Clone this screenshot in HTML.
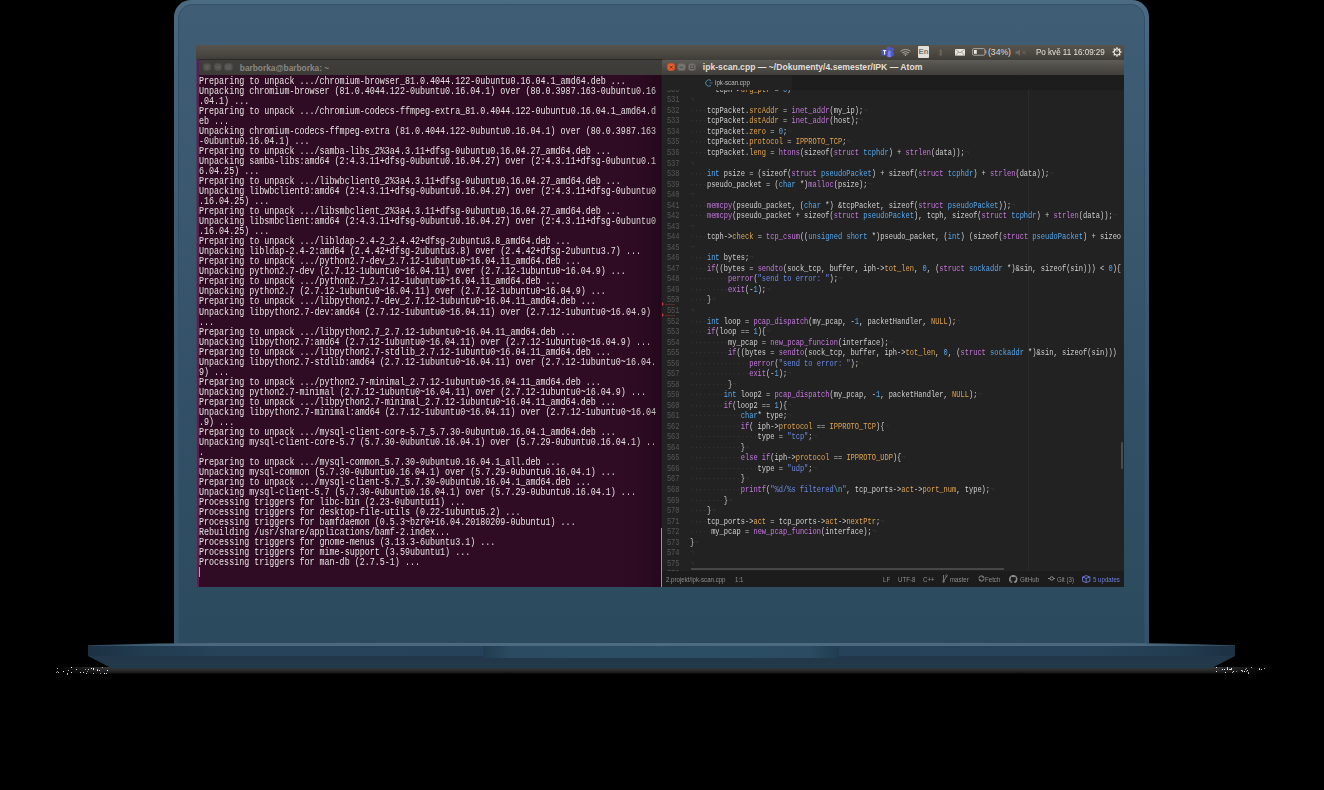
<!DOCTYPE html>
<html><head><meta charset="utf-8">
<style>
*{margin:0;padding:0;box-sizing:border-box}
html,body{width:1324px;height:790px;background:#000;overflow:hidden;position:relative}
body{font-family:"Liberation Sans",sans-serif}
.abs{position:absolute}
#frame{position:absolute;left:174px;top:0;width:975px;height:644px;border-radius:17px 17px 0 0;
 background:linear-gradient(#4b6b83,#45657d 10%,#3a596f 50%,#34536a 100%)}
#frame-in{position:absolute;left:4px;top:4px;right:4px;bottom:0;border-radius:15px 15px 0 0;
 border:1.2px solid #31506a;border-bottom:none;
 background:linear-gradient(#3f5e76,#3a596f 30%,#325166 60%,#2c4a5e 100%)}
#base{position:absolute;left:88px;top:642px;width:1147px;height:32px}
#base .top{position:absolute;left:0;top:0.6px;width:100%;height:3.4px;background:linear-gradient(90deg,#2b475b,#4a697f 8%,#4d6c82 50%,#4a697f 92%,#2b475b);
 clip-path:polygon(0 75%,6% 25%,15% 0,85% 0,94% 25%,100% 75%,100% 100%,0 100%)}
#base .mid{position:absolute;left:0;top:4px;width:100%;height:10px;
 background:linear-gradient(90deg,#1c3142 0%,#223c50 5%,#26435a 12%,#25415a 50%,#26435a 88%,#223c50 95%,#1c3142 100%)}
#base .notch{position:absolute;left:395px;top:4px;width:356px;height:12px;border-radius:0 0 3px 3px;
 background:linear-gradient(90deg,#203c50,#2a4b61 8%,#2c4e64 50%,#2a4b61 92%,#203c50)}
#base .bot{position:absolute;left:0;top:14px;width:1147px;height:12.5px;background:linear-gradient(#22384a,#233a4b);
 clip-path:polygon(0 0,100% 0,97.9% 100%,2.1% 100%)}
#base .specks i{position:absolute;width:1px;height:1px;background:#fff}
#base .shadow{position:absolute;left:-32px;top:24.8px;width:1211px;height:7.2px;background:linear-gradient(#363636,#2a2a2a 50%,#151515 85%,#000);
 -webkit-mask-image:linear-gradient(90deg,transparent,#000 4%,#000 96%,transparent)}
#screen{position:absolute;left:196px;top:45px;width:928px;height:542px;overflow:hidden;background:#3b3a36}
#panel{position:absolute;left:0;top:0;width:928px;height:14px;background:linear-gradient(#57534c,#4c4943 60%,#403e39)}
#panel .ic{position:absolute}
.tb{position:absolute;top:13.5px;height:16.5px}
#ttb{left:0;width:466px;background:linear-gradient(#2a2926 0,#2a2926 1px,#3f3e3a 1.5px,#3c3b37 100%)}
#atb{left:466px;width:462px;border-radius:3px 0 0 0;background:linear-gradient(#302f2c 0,#5c5b55 1.5px,#4e4d48 50%,#403f3b 100%)}
.btn{position:absolute;top:4.1px;width:8.5px;height:8.5px;border-radius:50%}
.tbtn{background:#55544e;box-shadow:inset 0 0 0 0.7px #4a4944}
.abtn{background:#75736d;box-shadow:inset 0 0 0 0.7px #5f5e58}
#term{position:absolute;left:0;top:30px;width:466px;height:512px;background:#2f0b24}
#term .lb{position:absolute;left:0;top:-16.5px;width:1px;height:530px;background:#4d3f5a}
#term .lb2{position:absolute;left:1px;top:-16.5px;width:1.6px;height:530px;background:#5a1f52}
#tt{position:absolute;left:3.4px;top:1.8px;font-family:"Liberation Mono",monospace;font-size:10px;line-height:10.033px;color:#e6e3e1;
 transform:scaleX(0.8369);transform-origin:0 0;white-space:pre}
#cursor{position:absolute;left:3.2px;top:492px;width:1px;height:10px;background:#a9a5a8}
#tscroll{position:absolute;left:465px;top:453px;width:1px;height:59px;background:#9a9596}
#tshade{position:absolute;left:425px;top:0;width:40px;height:512px;background:linear-gradient(90deg,rgba(0,0,0,0),rgba(0,0,0,0.08) 60%,rgba(0,0,0,0.25))}
.gm{position:absolute;left:0;width:12px;height:4px}
.gm i{position:absolute;left:0;top:0;width:0;height:0;border-top:2px solid transparent;border-bottom:2px solid transparent;border-left:2.5px solid #c0392b}
.gm b{position:absolute;left:3px;top:1.7px;width:10px;height:0.6px;background:#5a2a26}
#atom{position:absolute;left:466px;top:30px;width:462px;height:512px;background:#222222}
#tabs{position:absolute;left:0;top:0;width:462px;height:14.5px;background:#222222}
#tabfill{position:absolute;left:130px;top:0;width:332px;height:14.5px;background:#1d1d1d}
#ed{position:absolute;left:0;top:14.5px;width:458.8px;height:481px;overflow:hidden}
#gl,#cl{position:absolute;top:-4.7px;font-family:"Liberation Mono",monospace;font-size:8.3px;line-height:10.528px;
 transform:scaleX(0.8487);transform-origin:0 0;white-space:pre}
#gl{left:-0.4px;color:#575757;text-align:right;width:20.7px}
#cl{left:27.6px;color:#d0d0d0}
.iv{color:#3a3a3a}
.f{color:#c678dd}.k{color:#c678dd}.t{color:#56a8ec}.c{color:#e0a450}.p{color:#e0a450}.n{color:#56a8ec}.s{color:#6a8be6}.esc{color:#56b6c2}
#wrap{position:absolute;left:366px;top:0;width:1px;height:481px;background:#2c2c2c}
#hscroll{position:absolute;left:29px;top:493.2px;width:313px;height:2px;background:#474747}
#vscroll{position:absolute;left:458.7px;top:367px;width:2.5px;height:27px;background:#4a4a4a;border-radius:1px}
#status{position:absolute;left:0;top:495.8px;width:462px;height:16.2px;background:#1c1c1c;font-size:6.8px;color:#8e8e8e}
#status .it{position:absolute;top:4.8px;white-space:nowrap;transform:scaleX(0.9);transform-origin:0 0}
.stamp{font-size:6.8px}
</style></head><body>
<div id="frame"><div id="frame-in"></div></div>
<div id="base"><div class="shadow"></div><div class="specks"><i style="left:-20.4px;top:28.3px;opacity:0.68"></i><i style="left:-1.0px;top:28.9px;opacity:0.53"></i><i style="left:-32.3px;top:30.4px;opacity:0.63"></i><i style="left:-20.6px;top:31.5px;opacity:0.74"></i><i style="left:11.3px;top:27.8px;opacity:0.82"></i><i style="left:-25.0px;top:28.9px;opacity:0.93"></i><i style="left:-5.3px;top:29.7px;opacity:0.84"></i><i style="left:-29.6px;top:29.8px;opacity:0.80"></i><i style="left:-17.0px;top:24.7px;opacity:0.93"></i><i style="left:-7.9px;top:29.5px;opacity:0.94"></i><i style="left:4.8px;top:30.9px;opacity:0.70"></i><i style="left:9.4px;top:27.6px;opacity:0.97"></i><i style="left:13.6px;top:25.2px;opacity:0.57"></i><i style="left:-21.5px;top:31.3px;opacity:0.72"></i><i style="left:0.2px;top:26.6px;opacity:0.75"></i><i style="left:-12.5px;top:27.0px;opacity:0.79"></i><i style="left:-2.0px;top:30.8px;opacity:0.84"></i><i style="left:16.2px;top:30.5px;opacity:1.00"></i><i style="left:2.6px;top:25.6px;opacity:0.93"></i><i style="left:18.1px;top:30.8px;opacity:0.78"></i><i style="left:4.8px;top:26.0px;opacity:0.92"></i><i style="left:-2.6px;top:26.5px;opacity:0.53"></i><i style="left:12.3px;top:31.4px;opacity:0.54"></i><i style="left:9.4px;top:27.4px;opacity:0.58"></i><i style="left:-17.4px;top:29.9px;opacity:0.94"></i><i style="left:-30.7px;top:28.8px;opacity:0.52"></i><i style="left:5.1px;top:26.8px;opacity:0.94"></i><i style="left:19.0px;top:28.0px;opacity:1.00"></i><i style="left:-16.6px;top:25.0px;opacity:0.80"></i><i style="left:-31.3px;top:25.9px;opacity:0.70"></i><i style="left:1158.1px;top:25.6px;opacity:0.52"></i><i style="left:1171.3px;top:26.7px;opacity:0.98"></i><i style="left:1172.7px;top:27.1px;opacity:0.73"></i><i style="left:1153.5px;top:29.0px;opacity:0.80"></i><i style="left:1155.5px;top:28.8px;opacity:0.97"></i><i style="left:1152.9px;top:27.5px;opacity:0.86"></i><i style="left:1139.1px;top:26.6px;opacity:0.99"></i><i style="left:1153.6px;top:28.3px;opacity:0.51"></i><i style="left:1148.2px;top:28.6px;opacity:0.51"></i><i style="left:1158.4px;top:28.9px;opacity:0.53"></i><i style="left:1159.0px;top:27.8px;opacity:0.84"></i><i style="left:1145.0px;top:29.4px;opacity:0.87"></i><i style="left:1128.1px;top:24.9px;opacity:0.84"></i><i style="left:1176.1px;top:26.3px;opacity:0.73"></i><i style="left:1157.2px;top:26.7px;opacity:0.68"></i><i style="left:1142.9px;top:27.1px;opacity:0.80"></i><i style="left:1142.3px;top:27.1px;opacity:0.89"></i><i style="left:1128.4px;top:28.5px;opacity:0.87"></i><i style="left:1142.8px;top:26.1px;opacity:0.90"></i><i style="left:1139.2px;top:25.8px;opacity:0.72"></i><i style="left:1162.6px;top:25.2px;opacity:0.66"></i><i style="left:1144.0px;top:30.3px;opacity:0.72"></i><i style="left:1170.6px;top:25.7px;opacity:0.67"></i><i style="left:1160.2px;top:30.7px;opacity:0.73"></i><i style="left:1138.5px;top:25.3px;opacity:0.76"></i><i style="left:1136.7px;top:30.1px;opacity:0.92"></i><i style="left:1136.4px;top:26.5px;opacity:0.90"></i><i style="left:1159.7px;top:30.1px;opacity:0.67"></i><i style="left:1133.6px;top:26.5px;opacity:0.90"></i><i style="left:1140.8px;top:26.9px;opacity:0.71"></i></div><div class="top"></div><div class="mid"></div><div class="bot"></div><div class="notch"></div></div>
<div id="screen">
 <div id="panel">
  <!-- teams -->
  <svg class="ic" style="left:685px;top:1px" width="13" height="12" viewBox="0 0 13 12">
   <circle cx="8" cy="2.6" r="2.1" fill="#5059c9"/><circle cx="11.2" cy="3.4" r="1.6" fill="#5059c9"/>
   <rect x="6" y="4.6" width="4.8" height="6.6" rx="2" fill="#7b83eb"/><rect x="9.6" y="5.2" width="3.2" height="5" rx="1.5" fill="#5059c9"/>
   <rect x="0.4" y="3.2" width="6.4" height="6.4" rx="0.6" fill="#4b53bc"/>
   <path d="M1.9 4.6h3.4M3.6 4.6v4" stroke="#fff" stroke-width="1" fill="none"/>
  </svg>
  <!-- wifi -->
  <svg class="ic" style="left:704px;top:4px" width="11" height="7" viewBox="0 0 11 7">
   <path d="M0.5 2.2Q5.5 -1.2 10.5 2.2M2 3.8Q5.5 1.5 9 3.8M3.5 5.3Q5.5 4 7.5 5.3" stroke="#b5b1a9" stroke-width="0.9" fill="none"/>
   <circle cx="5.5" cy="6.3" r="0.7" fill="#b5b1a9"/>
  </svg>
  <!-- En -->
  <div class="ic" style="left:722px;top:1.0px;width:11.2px;height:11.6px;background:#e4e0d8;border-radius:1px;color:#76736c;font-size:7.8px;font-weight:bold;line-height:11.6px;text-align:center;-webkit-font-smoothing:antialiased">En</div>
  <!-- bluetooth -->
  <svg class="ic" style="left:742px;top:3px" width="5" height="9" viewBox="0 0 5 9">
   <path d="M1 2.5L4 6L2.5 8V1L4 3L1 6.5" stroke="#6c6962" stroke-width="0.8" fill="none"/>
  </svg>
  <!-- mail -->
  <svg class="ic" style="left:758.5px;top:3.5px" width="10" height="7" viewBox="0 0 10 7">
   <rect x="0" y="0" width="10" height="6.6" fill="#e9e6e0"/>
   <path d="M0.5 0.5L5 3.8L9.5 0.5M0.5 6.2L3.6 3M9.5 6.2L6.4 3" stroke="#6f6c66" stroke-width="0.6" fill="none"/>
  </svg>
  <!-- battery -->
  <svg class="ic" style="left:776px;top:3.3px" width="15" height="8" viewBox="0 0 15 8">
   <rect x="0.6" y="0.6" width="12.3" height="6.6" rx="1.3" fill="none" stroke="#a9a59d" stroke-width="1"/>
   <rect x="13.2" y="2.4" width="1.2" height="3" fill="#a9a59d"/>
   <rect x="2" y="2" width="2.8" height="3.8" fill="#ece9e3"/>
  </svg>
  <div class="ic" style="left:792px;top:2.2px;font-size:8.6px;color:#dedad2;white-space:nowrap">(34%)</div>
  <!-- mute -->
  <svg class="ic" style="left:819px;top:4px" width="12" height="7" viewBox="0 0 12 7">
   <path d="M0.5 2.3h2l2.5-2v6.4l-2.5-2h-2z" fill="#6e6b64"/>
   <path d="M7.2 1.8l3.4 3.4M10.6 1.8l-3.4 3.4" stroke="#6e6b64" stroke-width="0.9"/>
  </svg>
  <div class="ic" id="clock" style="left:839.5px;top:1.9px;font-size:9px;transform:scaleX(0.895);transform-origin:0 0;color:#e4e0d8;white-space:nowrap">Po kvě 11 16:09:29</div>
  <!-- power gear -->
  <svg class="ic" style="left:915.6px;top:2.1px" width="10" height="10" viewBox="0 0 10 10">
   <path fill="#ebe8e2" d="M4.25 1.58 L4.39 0.34 L5.61 0.34 L5.75 1.58 L6.34 1.77 L6.89 2.05 L7.87 1.27 L8.73 2.13 L7.95 3.11 L8.23 3.66 L8.42 4.25 L9.66 4.39 L9.66 5.61 L8.42 5.75 L8.23 6.34 L7.95 6.89 L8.73 7.87 L7.87 8.73 L6.89 7.950 L6.34 8.23 L5.75 8.42 L5.61 9.66 L4.39 9.66 L4.25 8.42 L3.66 8.23 L3.11 7.95 L2.13 8.73 L1.27 7.87 L2.05 6.89 L1.77 6.34 L1.58 5.75 L0.34 5.61 L0.34 4.39 L1.58 4.25 L1.77 3.66 L2.05 3.11 L1.27 2.13 L2.13 1.27 L3.11 2.05 L3.66 1.77Z"/>
   <circle cx="5" cy="5.2" r="2.3" fill="#4a4742"/>
   <path d="M5 2.2v3" stroke="#4a4742" stroke-width="1.8"/>
   <path d="M5 1.8v3.2" stroke="#ebe8e2" stroke-width="0.9"/>
  </svg>
 </div>
 <div id="ttb" class="tb">
  <div class="btn tbtn" style="left:6.8px"><svg class="abs" style="left:0;top:0" width="8.5" height="8.5" viewBox="0 0 8.5 8.5"><path d="M2.9 2.9l2.7 2.7M5.6 2.9l-2.7 2.7" stroke="#6a6963" stroke-width="0.7"/></svg></div>
  <div class="btn tbtn" style="left:17.6px"><svg class="abs" style="left:0;top:0" width="8.5" height="8.5" viewBox="0 0 8.5 8.5"><path d="M2.6 4.25h3.3" stroke="#6a6963" stroke-width="0.8"/></svg></div>
  <div class="btn tbtn" style="left:28px"><svg class="abs" style="left:0;top:0" width="8.5" height="8.5" viewBox="0 0 8.5 8.5"><rect x="2.7" y="2.9" width="3.1" height="2.7" fill="none" stroke="#6a6963" stroke-width="0.7"/></svg></div>
  <div class="abs" id="ttitle" style="left:43.8px;top:4.4px;font-size:8.33px;font-weight:bold;color:#8a8880;white-space:nowrap">barborka@barborka: ~</div>
 </div>
 <div id="atb" class="tb">
  <div class="btn" style="left:4.5px;background:#e95e2e;box-shadow:inset 0 0 0 0.7px #c84d22"><svg class="abs" style="left:0;top:0" width="8.5" height="8.5" viewBox="0 0 8.5 8.5"><path d="M2.9 2.9l2.7 2.7M5.6 2.9l-2.7 2.7" stroke="#5a2210" stroke-width="0.8"/></svg></div>
  <div class="btn abtn" style="left:15px"><svg class="abs" style="left:0;top:0" width="8.5" height="8.5" viewBox="0 0 8.5 8.5"><path d="M2.6 4.25h3.3" stroke="#4a4944" stroke-width="0.9"/></svg></div>
  <div class="btn abtn" style="left:25.6px"><svg class="abs" style="left:0;top:0" width="8.5" height="8.5" viewBox="0 0 8.5 8.5"><rect x="2.7" y="2.9" width="3.1" height="2.7" fill="none" stroke="#4a4944" stroke-width="0.8"/></svg></div>
  <div class="abs" id="atitle" style="left:40.8px;top:3.6px;font-size:8.62px;font-weight:bold;color:#e3dfd7;white-space:nowrap">ipk-scan.cpp — ~/Dokumenty/4.semester/IPK — Atom</div>
 </div>
 <div id="term"><div class="lb"></div><div class="lb2"></div>
  <div id="tt"><div class="tl">Preparing to unpack .../chromium-browser_81.0.4044.122-0ubuntu0.16.04.1_amd64.deb ...</div><div class="tl">Unpacking chromium-browser (81.0.4044.122-0ubuntu0.16.04.1) over (80.0.3987.163-0ubuntu0.16</div><div class="tl">.04.1) ...</div><div class="tl">Preparing to unpack .../chromium-codecs-ffmpeg-extra_81.0.4044.122-0ubuntu0.16.04.1_amd64.d</div><div class="tl">eb ...</div><div class="tl">Unpacking chromium-codecs-ffmpeg-extra (81.0.4044.122-0ubuntu0.16.04.1) over (80.0.3987.163</div><div class="tl">-0ubuntu0.16.04.1) ...</div><div class="tl">Preparing to unpack .../samba-libs_2%3a4.3.11+dfsg-0ubuntu0.16.04.27_amd64.deb ...</div><div class="tl">Unpacking samba-libs:amd64 (2:4.3.11+dfsg-0ubuntu0.16.04.27) over (2:4.3.11+dfsg-0ubuntu0.1</div><div class="tl">6.04.25) ...</div><div class="tl">Preparing to unpack .../libwbclient0_2%3a4.3.11+dfsg-0ubuntu0.16.04.27_amd64.deb ...</div><div class="tl">Unpacking libwbclient0:amd64 (2:4.3.11+dfsg-0ubuntu0.16.04.27) over (2:4.3.11+dfsg-0ubuntu0</div><div class="tl">.16.04.25) ...</div><div class="tl">Preparing to unpack .../libsmbclient_2%3a4.3.11+dfsg-0ubuntu0.16.04.27_amd64.deb ...</div><div class="tl">Unpacking libsmbclient:amd64 (2:4.3.11+dfsg-0ubuntu0.16.04.27) over (2:4.3.11+dfsg-0ubuntu0</div><div class="tl">.16.04.25) ...</div><div class="tl">Preparing to unpack .../libldap-2.4-2_2.4.42+dfsg-2ubuntu3.8_amd64.deb ...</div><div class="tl">Unpacking libldap-2.4-2:amd64 (2.4.42+dfsg-2ubuntu3.8) over (2.4.42+dfsg-2ubuntu3.7) ...</div><div class="tl">Preparing to unpack .../python2.7-dev_2.7.12-1ubuntu0~16.04.11_amd64.deb ...</div><div class="tl">Unpacking python2.7-dev (2.7.12-1ubuntu0~16.04.11) over (2.7.12-1ubuntu0~16.04.9) ...</div><div class="tl">Preparing to unpack .../python2.7_2.7.12-1ubuntu0~16.04.11_amd64.deb ...</div><div class="tl">Unpacking python2.7 (2.7.12-1ubuntu0~16.04.11) over (2.7.12-1ubuntu0~16.04.9) ...</div><div class="tl">Preparing to unpack .../libpython2.7-dev_2.7.12-1ubuntu0~16.04.11_amd64.deb ...</div><div class="tl">Unpacking libpython2.7-dev:amd64 (2.7.12-1ubuntu0~16.04.11) over (2.7.12-1ubuntu0~16.04.9)</div><div class="tl">...</div><div class="tl">Preparing to unpack .../libpython2.7_2.7.12-1ubuntu0~16.04.11_amd64.deb ...</div><div class="tl">Unpacking libpython2.7:amd64 (2.7.12-1ubuntu0~16.04.11) over (2.7.12-1ubuntu0~16.04.9) ...</div><div class="tl">Preparing to unpack .../libpython2.7-stdlib_2.7.12-1ubuntu0~16.04.11_amd64.deb ...</div><div class="tl">Unpacking libpython2.7-stdlib:amd64 (2.7.12-1ubuntu0~16.04.11) over (2.7.12-1ubuntu0~16.04.</div><div class="tl">9) ...</div><div class="tl">Preparing to unpack .../python2.7-minimal_2.7.12-1ubuntu0~16.04.11_amd64.deb ...</div><div class="tl">Unpacking python2.7-minimal (2.7.12-1ubuntu0~16.04.11) over (2.7.12-1ubuntu0~16.04.9) ...</div><div class="tl">Preparing to unpack .../libpython2.7-minimal_2.7.12-1ubuntu0~16.04.11_amd64.deb ...</div><div class="tl">Unpacking libpython2.7-minimal:amd64 (2.7.12-1ubuntu0~16.04.11) over (2.7.12-1ubuntu0~16.04</div><div class="tl">.9) ...</div><div class="tl">Preparing to unpack .../mysql-client-core-5.7_5.7.30-0ubuntu0.16.04.1_amd64.deb ...</div><div class="tl">Unpacking mysql-client-core-5.7 (5.7.30-0ubuntu0.16.04.1) over (5.7.29-0ubuntu0.16.04.1) ..</div><div class="tl">.</div><div class="tl">Preparing to unpack .../mysql-common_5.7.30-0ubuntu0.16.04.1_all.deb ...</div><div class="tl">Unpacking mysql-common (5.7.30-0ubuntu0.16.04.1) over (5.7.29-0ubuntu0.16.04.1) ...</div><div class="tl">Preparing to unpack .../mysql-client-5.7_5.7.30-0ubuntu0.16.04.1_amd64.deb ...</div><div class="tl">Unpacking mysql-client-5.7 (5.7.30-0ubuntu0.16.04.1) over (5.7.29-0ubuntu0.16.04.1) ...</div><div class="tl">Processing triggers for libc-bin (2.23-0ubuntu11) ...</div><div class="tl">Processing triggers for desktop-file-utils (0.22-1ubuntu5.2) ...</div><div class="tl">Processing triggers for bamfdaemon (0.5.3~bzr0+16.04.20180209-0ubuntu1) ...</div><div class="tl">Rebuilding /usr/share/applications/bamf-2.index...</div><div class="tl">Processing triggers for gnome-menus (3.13.3-6ubuntu3.1) ...</div><div class="tl">Processing triggers for mime-support (3.59ubuntu1) ...</div><div class="tl">Processing triggers for man-db (2.7.5-1) ...</div></div>
  <div id="cursor"></div><div id="tscroll"></div><div id="tshade"></div>
 </div>
 <div id="atom">
  <div id="ed"><div id="wrap"></div><div id="gl"><div class="gl">530</div><div class="gl">531</div><div class="gl">532</div><div class="gl">533</div><div class="gl">534</div><div class="gl">535</div><div class="gl">536</div><div class="gl">537</div><div class="gl">538</div><div class="gl">539</div><div class="gl">540</div><div class="gl">541</div><div class="gl">542</div><div class="gl">543</div><div class="gl">544</div><div class="gl">545</div><div class="gl">546</div><div class="gl">547</div><div class="gl">548</div><div class="gl">549</div><div class="gl">550</div><div class="gl">551</div><div class="gl">552</div><div class="gl">553</div><div class="gl">554</div><div class="gl">555</div><div class="gl">556</div><div class="gl">557</div><div class="gl">558</div><div class="gl">559</div><div class="gl">560</div><div class="gl">561</div><div class="gl">562</div><div class="gl">563</div><div class="gl">564</div><div class="gl">565</div><div class="gl">566</div><div class="gl">567</div><div class="gl">568</div><div class="gl">569</div><div class="gl">570</div><div class="gl">571</div><div class="gl">572</div><div class="gl">573</div><div class="gl">574</div><div class="gl">575</div><div class="gl">576</div></div><div id="cl"><div class="cl"><span class="iv">······</span>tcph-&gt;<span class="p">urg_ptr</span> = <span class="n">0</span>;<span class="iv">¬</span></div><div class="cl"><span class="iv">¬</span></div><div class="cl"><span class="iv">····</span>tcpPacket.<span class="p">srcAddr</span> = <span class="f">inet_addr</span>(my_ip);<span class="iv">¬</span></div><div class="cl"><span class="iv">····</span>tcpPacket.<span class="p">dstAddr</span> = <span class="f">inet_addr</span>(host);<span class="iv">¬</span></div><div class="cl"><span class="iv">····</span>tcpPacket.<span class="p">zero</span> = <span class="n">0</span>;<span class="iv">¬</span></div><div class="cl"><span class="iv">····</span>tcpPacket.<span class="p">protocol</span> = <span class="c">IPPROTO_TCP</span>;<span class="iv">¬</span></div><div class="cl"><span class="iv">····</span>tcpPacket.<span class="p">leng</span> = <span class="f">htons</span>(sizeof(<span class="k">struct</span> <span class="t">tcphdr</span>) + <span class="f">strlen</span>(data));<span class="iv">¬</span></div><div class="cl"><span class="iv">¬</span></div><div class="cl"><span class="iv">····</span><span class="t">int</span> psize = (sizeof(<span class="k">struct</span> <span class="t">pseudoPacket</span>) + sizeof(<span class="k">struct</span> <span class="t">tcphdr</span>) + <span class="f">strlen</span>(data));<span class="iv">¬</span></div><div class="cl"><span class="iv">····</span>pseudo_packet = (<span class="t">char</span> *)<span class="f">malloc</span>(psize);<span class="iv">¬</span></div><div class="cl"><span class="iv">¬</span></div><div class="cl"><span class="iv">····</span><span class="f">memcpy</span>(pseudo_packet, (<span class="t">char</span> *) &amp;tcpPacket, sizeof(<span class="k">struct</span> <span class="t">pseudoPacket</span>));<span class="iv">¬</span></div><div class="cl"><span class="iv">····</span><span class="f">memcpy</span>(pseudo_packet + sizeof(<span class="k">struct</span> <span class="t">pseudoPacket</span>), tcph, sizeof(<span class="k">struct</span> <span class="t">tcphdr</span>) + <span class="f">strlen</span>(data));<span class="iv">¬</span></div><div class="cl"><span class="iv">¬</span></div><div class="cl"><span class="iv">····</span>tcph-&gt;<span class="p">check</span> = <span class="f">tcp_csum</span>((<span class="t">unsigned</span> <span class="t">short</span> *)pseudo_packet, (<span class="t">int</span>) (sizeof(<span class="k">struct</span> <span class="t">pseudoPacket</span>) + sizeof(<span class="k">struct</span> <span class="t">tcphdr</span>)<span class="iv">¬</span></div><div class="cl"><span class="iv">¬</span></div><div class="cl"><span class="iv">····</span><span class="t">int</span> bytes;<span class="iv">¬</span></div><div class="cl"><span class="iv">····</span><span class="k">if</span>((bytes = <span class="f">sendto</span>(sock_tcp, buffer, iph-&gt;<span class="p">tot_len</span>, <span class="n">0</span>, (<span class="k">struct</span> <span class="t">sockaddr</span> *)&amp;sin, sizeof(sin))) &lt; <span class="n">0</span>){<span class="iv">¬</span></div><div class="cl"><span class="iv">·········</span><span class="f">perror</span>(<span class="s">&quot;send to error: &quot;</span>);<span class="iv">¬</span></div><div class="cl"><span class="iv">·········</span><span class="f">exit</span>(-<span class="n">1</span>);<span class="iv">¬</span></div><div class="cl"><span class="iv">····</span>}<span class="iv">¬</span></div><div class="cl"><span class="iv">¬</span></div><div class="cl"><span class="iv">····</span><span class="t">int</span> loop = <span class="f">pcap_dispatch</span>(my_pcap, -<span class="n">1</span>, packetHandler, <span class="c">NULL</span>);<span class="iv">¬</span></div><div class="cl"><span class="iv">····</span><span class="k">if</span>(loop == <span class="n">1</span>){<span class="iv">¬</span></div><div class="cl"><span class="iv">·········</span>my_pcap = <span class="f">new_pcap_funcion</span>(interface);<span class="iv">¬</span></div><div class="cl"><span class="iv">·········</span><span class="k">if</span>((bytes = <span class="f">sendto</span>(sock_tcp, buffer, iph-&gt;<span class="p">tot_len</span>, <span class="n">0</span>, (<span class="k">struct</span> <span class="t">sockaddr</span> *)&amp;sin, sizeof(sin))) &lt; <span class="n">0</span>){<span class="iv">¬</span></div><div class="cl"><span class="iv">··············</span><span class="f">perror</span>(<span class="s">&quot;send to error: &quot;</span>);<span class="iv">¬</span></div><div class="cl"><span class="iv">··············</span><span class="f">exit</span>(-<span class="n">1</span>);<span class="iv">¬</span></div><div class="cl"><span class="iv">·········</span>}<span class="iv">¬</span></div><div class="cl"><span class="iv">········</span><span class="t">int</span> loop2 = <span class="f">pcap_dispatch</span>(my_pcap, -<span class="n">1</span>, packetHandler, <span class="c">NULL</span>);<span class="iv">¬</span></div><div class="cl"><span class="iv">········</span><span class="k">if</span>(loop2 == <span class="n">1</span>){<span class="iv">¬</span></div><div class="cl"><span class="iv">············</span><span class="t">char</span>* type;<span class="iv">¬</span></div><div class="cl"><span class="iv">············</span><span class="k">if</span>( iph-&gt;<span class="p">protocol</span> == <span class="c">IPPROTO_TCP</span>){<span class="iv">¬</span></div><div class="cl"><span class="iv">················</span>type = <span class="s">&quot;tcp&quot;</span>;<span class="iv">¬</span></div><div class="cl"><span class="iv">············</span>}<span class="iv">¬</span></div><div class="cl"><span class="iv">············</span><span class="k">else</span> <span class="k">if</span>(iph-&gt;<span class="p">protocol</span> == <span class="c">IPPROTO_UDP</span>){<span class="iv">¬</span></div><div class="cl"><span class="iv">················</span>type = <span class="s">&quot;udp&quot;</span>;<span class="iv">¬</span></div><div class="cl"><span class="iv">············</span>}<span class="iv">¬</span></div><div class="cl"><span class="iv">············</span><span class="f">printf</span>(<span class="s">&quot;%d/%s filtered<span class="esc">\n</span>&quot;</span>, tcp_ports-&gt;<span class="p">act</span>-&gt;<span class="p">port_num</span>, type);<span class="iv">¬</span></div><div class="cl"><span class="iv">········</span>}<span class="iv">¬</span></div><div class="cl"><span class="iv">····</span>}<span class="iv">¬</span></div><div class="cl"><span class="iv">····</span>tcp_ports-&gt;<span class="p">act</span> = tcp_ports-&gt;<span class="p">act</span>-&gt;<span class="p">nextPtr</span>;<span class="iv">¬</span></div><div class="cl"><span class="iv">·····</span>my_pcap = <span class="f">new_pcap_funcion</span>(interface);<span class="iv">¬</span></div><div class="cl">}<span class="iv">¬</span></div><div class="cl"><span class="iv">¬</span></div><div class="cl"><span class="iv">¬</span></div><div class="cl"><span class="iv">¬</span></div></div></div>
  <div id="tabs"><div id="tabfill"></div>
   <svg class="abs" style="left:43px;top:3.5px" width="8" height="8" viewBox="0 0 8 8"><path d="M6 1.6A3.2 3.2 0 1 0 6 6.4" stroke="#4d8fb3" stroke-width="1" fill="none"/><path d="M4.6 4h3" stroke="#4d8fb3" stroke-width="0.7"/></svg>
   <div class="abs" style="left:52.5px;top:3.0px;font-size:7.4px;color:#bdbdbd;white-space:nowrap;transform:scaleX(0.84);transform-origin:0 0">ipk-scan.cpp</div>
  </div>
  <div class="gm" style="top:227.4px"><i></i><b></b></div><div class="gm" style="top:238.2px"><i></i><b></b></div><div id="hscroll"></div><div id="vscroll"></div>
  <div id="status">
   <div class="it" style="left:3.5px">2.projekt/ipk-scan.cpp</div>
   <div class="it" style="left:73px">1:1</div>
   <div class="it" style="left:220.5px">LF</div>
   <div class="it" style="left:236px">UTF-8</div>
   <div class="it" style="left:260.8px">C++</div>
   <svg class="abs" style="left:279.5px;top:3.5px" width="6" height="9" viewBox="0 0 6 9"><path d="M1.5 1v6.6M1.5 7.5L4.6 2" stroke="#8e8e8e" stroke-width="0.8" fill="none"/><circle cx="1.5" cy="7.6" r="0.9" fill="none" stroke="#8e8e8e" stroke-width="0.6"/><circle cx="4.6" cy="1.6" r="0.9" fill="none" stroke="#8e8e8e" stroke-width="0.6"/></svg>
   <div class="it" style="left:288px">master</div>
   <svg class="abs" style="left:315.5px;top:4.5px" width="7" height="7" viewBox="0 0 7 7"><path d="M1 3.5A2.5 2.5 0 0 1 5.8 2.4M6 3.5A2.5 2.5 0 0 1 1.2 4.6" stroke="#8e8e8e" stroke-width="1" fill="none"/><path d="M5 0.8L6.2 2.6L4.2 2.8z M2 6.2L0.8 4.4L2.8 4.2z" fill="#8e8e8e"/></svg>
   <div class="it" style="left:322.8px">Fetch</div>
   <svg class="abs" style="left:347.3px;top:4px" width="8.5" height="8.5" viewBox="0 0 16 16"><path fill="#8e8e8e" d="M8 0C3.58 0 0 3.58 0 8c0 3.54 2.29 6.53 5.47 7.59.4.07.55-.17.55-.38 0-.19-.01-.82-.01-1.49-2.01.37-2.53-.49-2.69-.94-.09-.23-.48-.94-.82-1.13-.28-.15-.68-.52-.01-.53.63-.01 1.08.58 1.23.82.72 1.21 1.87.87 2.33.66.07-.52.28-.87.51-1.07-1.78-.2-3.64-.89-3.64-3.95 0-.87.31-1.59.82-2.15-.08-.2-.36-1.02.08-2.12 0 0 .67-.21 2.200.82.64-.18 1.32-.27 2-.27.68 0 1.36.09 2 .27 1.53-1.04 2.2-.82 2.2-.82.44 1.1.16 1.92.08 2.12.51.56.82 1.27.82 2.15 0 3.07-1.87 3.75-3.65 3.95.29.25.54.73.54 1.48 0 1.07-.01 1.93-.01 2.2 0 .21.15.46.55.38A8.013 8.013 0 0016 8c0-4.42-3.58-8-8-8z"/></svg>
   <div class="it" style="left:357.5px">GitHub</div>
   <svg class="abs" style="left:385.5px;top:5.5px" width="7.5" height="5" viewBox="0 0 7.5 5"><path d="M0 2.5h7.5" stroke="#8e8e8e" stroke-width="1"/><circle cx="3.75" cy="2.5" r="1.7" fill="#1c1c1c" stroke="#8e8e8e" stroke-width="1"/></svg>
   <div class="it" style="left:394.5px">Git (3)</div>
   <svg class="abs" style="left:420px;top:4.2px" width="8.5" height="8" viewBox="0 0 8.5 8"><path d="M0.6 2L4.2 0.6L7.9 2V6.2L4.2 7.5L0.6 6.2Z M0.6 2L4.2 3.4L7.9 2M4.2 3.4V7.5" stroke="#6d7de0" stroke-width="0.9" fill="none"/></svg>
   <div class="it" style="left:431px;color:#6d7de0">5 updates</div>
  </div>
 </div>
</div>
</body></html>
